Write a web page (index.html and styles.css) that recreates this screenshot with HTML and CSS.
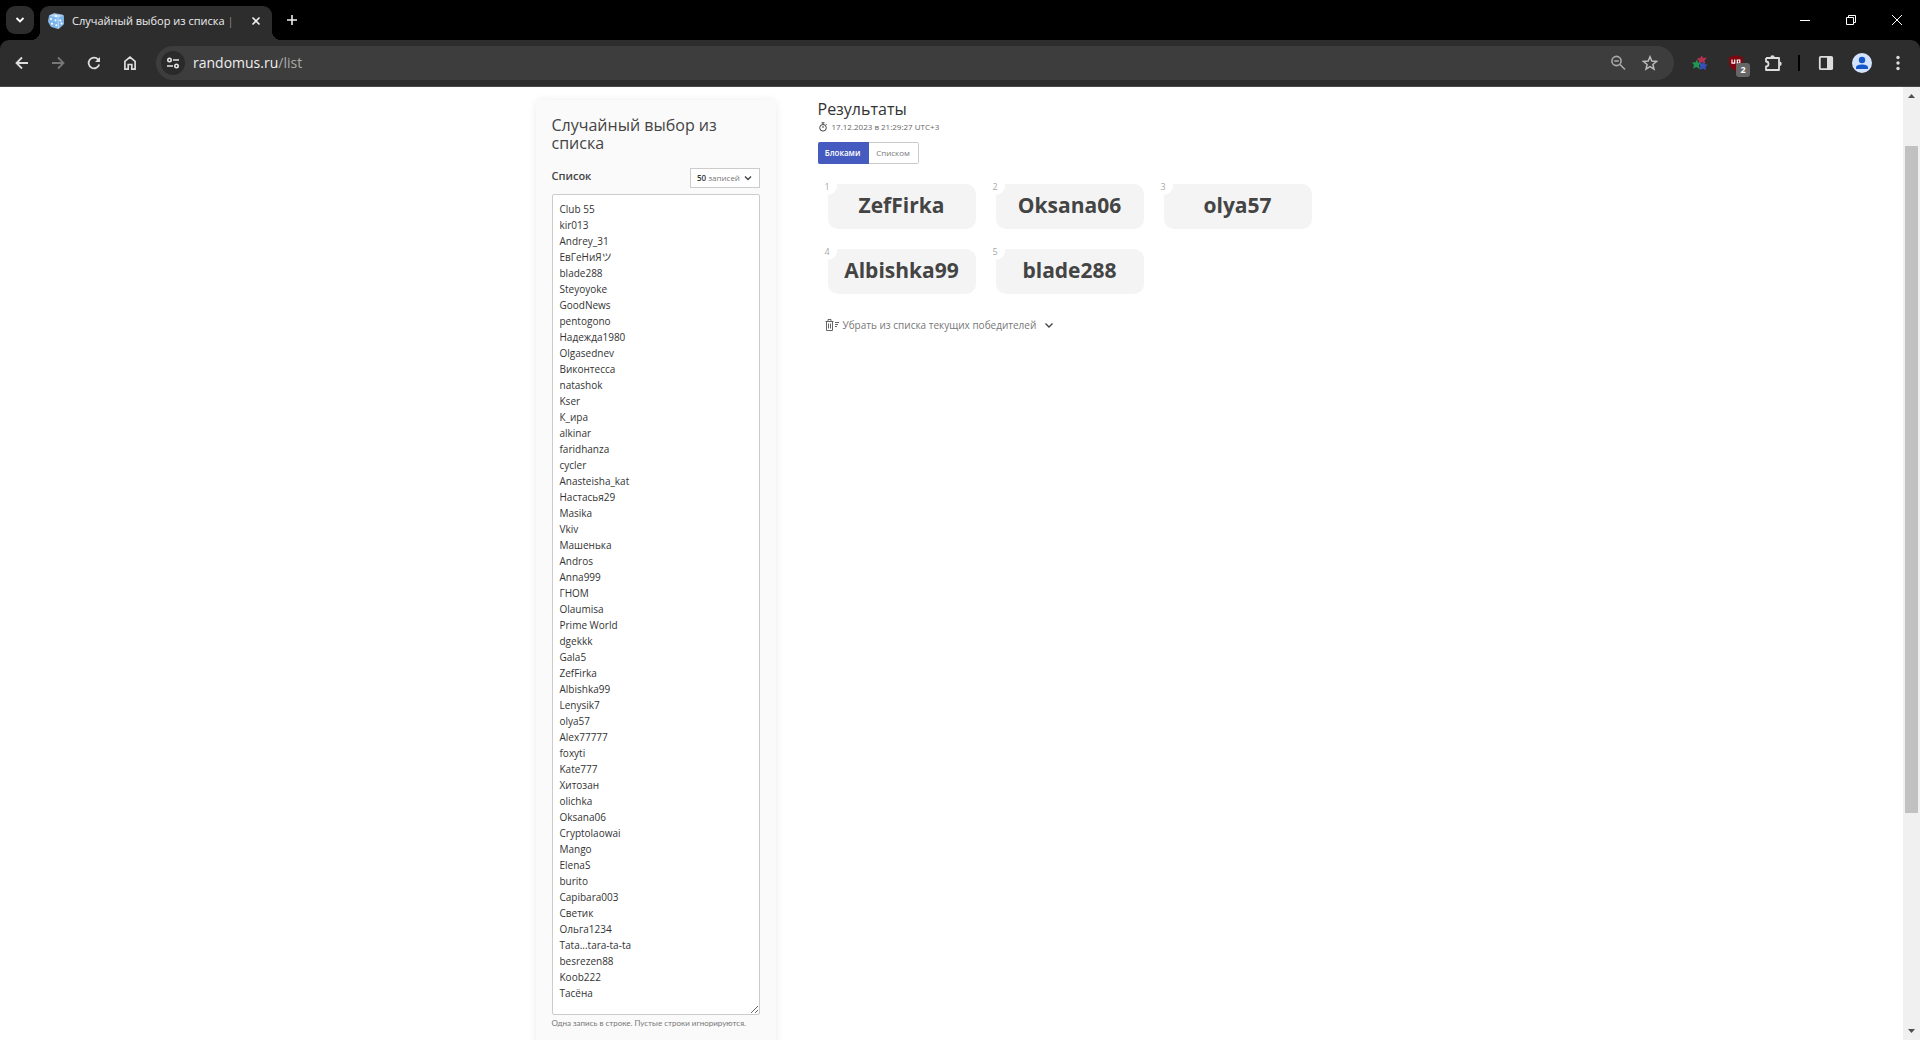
FILE: index.html
```html
<!DOCTYPE html>
<html lang="ru">
<head>
<meta charset="utf-8">
<title>Случайный выбор из списка</title>
<link rel="stylesheet" href="styles.css">
</head>
<body>
<div class="window">
  <header class="tabstrip">
    <button class="tab-search" aria-label="Поиск вкладок"><svg width="10" height="10" viewBox="0 0 10 10"><path d="M1.500 3l3.500 3.500L8.500 3" fill="none" stroke="#fff" stroke-width="1.800"/></svg></button>
    <div class="tab">
      <svg class="favicon" width="16" height="16" viewBox="0 0 16 16"><path d="M1.500 2.500L6 .5l8.500 1.500Q15.500 2.200 15.500 3l.3 8-5.300 4.800-7.500-2.300L.3 8.500z" fill="#7db6ec" stroke="#a9d0f5" stroke-width=".6" stroke-linejoin="round"/><path d="M1.500 2.800l8.500 2 5-2.300L6.500 1z" fill="#b5d8f8"/><path d="M10 5l.5 10.500" fill="none" stroke="#d4eafd" stroke-width=".8"/><g fill="#fff"><circle cx="8" cy="2.900" r="1"/><circle cx="3" cy="6" r="1"/><circle cx="7.500" cy="7.200" r="1"/><circle cx="4" cy="10.800" r="1"/><circle cx="8.300" cy="12.200" r="1"/><circle cx="12.300" cy="7.500" r="1"/><circle cx="13.500" cy="10.500" r="1"/></g></svg>
      <span class="tab-title">Случайный выбор из списка <span class="fade">|</span></span>
      <button class="icon-button tab-close" aria-label="Закрыть вкладку"><svg width="10" height="10" viewBox="0 0 10 10"><path d="M1.500 1.500l7 7M8.500 1.500l-7 7" stroke="#eee" stroke-width="1.600"/></svg></button>
    </div>
    <button class="icon-button new-tab" aria-label="Новая вкладка"><svg width="12" height="12" viewBox="0 0 12 12"><path d="M6 1v10M1 6h10" stroke="#eee" stroke-width="1.600"/></svg></button>
    <div class="window-controls">
      <button class="icon-button" aria-label="Свернуть"><svg width="10" height="10" viewBox="0 0 10 10"><path d="M0 5.500h10" stroke="#fff"/></svg></button>
      <button class="icon-button" aria-label="Восстановить"><svg width="10" height="10" viewBox="0 0 10 10"><path d="M.5 2.500h7v7h-7zM2.500 2V.5h7v7H8" fill="none" stroke="#fff"/></svg></button>
      <button class="icon-button" aria-label="Закрыть"><svg width="10" height="10" viewBox="0 0 10 10"><path d="M0 0l10 10M10 0L0 10" stroke="#fff"/></svg></button>
    </div>
  </header>
  <nav class="toolbar">
    <div class="nav-buttons">
      <button class="icon-button" aria-label="Назад"><svg width="16" height="16" viewBox="0 0 16 16"><path d="M14 8H3M8 2.500L2.500 8 8 13.500" fill="none" stroke="#ddd" stroke-width="1.800"/></svg></button>
      <button class="icon-button" aria-label="Вперёд"><svg width="16" height="16" viewBox="0 0 16 16"><path d="M2 8h11M8 2.500L13.500 8 8 13.500" fill="none" stroke="#777" stroke-width="1.800"/></svg></button>
      <button class="icon-button" aria-label="Обновить"><svg width="16" height="16" viewBox="0 0 16 16"><path d="M13.200 9.500A5.400 5.400 0 1 1 12 4.300L13 5.500" fill="none" stroke="#ddd" stroke-width="1.800"/><path d="M14 2v5H9z" fill="#ddd"/></svg></button>
      <button class="icon-button" aria-label="Домой"><svg width="16" height="16" viewBox="0 0 16 16"><path d="M2.900 6.300L8 2.200l5.100 4.100v7.800H9.800V9.500H6.200v4.600H2.900z" fill="none" stroke="#ddd" stroke-width="1.700"/></svg></button>
    </div>
    <div class="omnibox">
      <button class="site-info" aria-label="Сведения о сайте"><svg width="14" height="14" viewBox="0 0 14 14"><g fill="none" stroke="#e5e5e5" stroke-width="1.600"><circle cx="3.500" cy="4" r="1.700"/><path d="M7 4h6M1 10h6"/><circle cx="10.500" cy="10" r="1.700"/></g></svg></button>
      <span class="url">randomus.ru<span class="path">/list</span></span>
      <button class="icon-button" aria-label="Масштаб"><svg width="16" height="16" viewBox="0 0 16 16"><g fill="none" stroke="#aaa" stroke-width="1.600"><circle cx="6.500" cy="6" r="4.600"/><path d="M10 9.500l5 5M4.200 6h4.600"/></g></svg></button>
      <button class="icon-button" aria-label="Добавить в закладки"><svg width="16" height="16" viewBox="0 0 16 16"><path d="M8 1.800l1.800 4.300 4.700.4-3.600 3 1.100 4.600L8 11.700l-4 2.400 1.100-4.600-3.600-3 4.700-.4z" fill="none" stroke="#bbb" stroke-width="1.500"/></svg></button>
    </div>
    <div class="extensions">
      <button class="icon-button" aria-label="Расширение"><svg width="16" height="16" viewBox="0 0 16 16"><path d="M10 .5l1 2.500 4-.5-2.500 3 1 3-3.500-1.500-3 2V6L5 3.500l3-.5z" fill="#b5314f"/><path d="M5 4.500l1 3 4 .5-3 2 .5 4-3-2-3.500 1.500 1-3.500L0 7.500l3.500-.3z" fill="#219653"/><path d="M12 6.500l.8 2.500 3 1-2.300 1.500.5 3.500-3-1.500-3.500 1.500.8-3.500L7.500 8l3 .5z" fill="#3550b8"/></svg></button>
      <button class="icon-button blocker" aria-label="uBlock"><svg width="16" height="16" viewBox="0 0 16 16"><path d="M8 0q3 2 7 2v5c0 5-3 7-7 9-4-2-7-4-7-9V2q4 0 7-2z" fill="#800610"/><path d="M4 4.500v3.700h2.700V4.500M9.300 9.500V5h2.500v3H9.500" fill="none" stroke="#fff" stroke-width="1.200"/></svg><span class="badge">2</span></button>
      <button class="icon-button" aria-label="Расширения"><svg width="18" height="18" viewBox="0 0 18 18"><path d="M2 4h13v3.500M15 11v5H2v-3.500a2.400 2.400 0 0 0 0-5V4M15 7v5" fill="none" stroke="#ddd" stroke-width="1.800" stroke-linejoin="round"/><path d="M6.300 3.500a2.200 2.200 0 0 1 4.400 0zM15.500 7.500a2.200 2.200 0 0 1 0 4.400z" fill="#ddd"/></svg></button>
    </div>
    <div class="divider"></div>
    <div class="profile">
      <button class="icon-button" aria-label="Боковая панель"><svg width="16" height="16" viewBox="0 0 16 16"><rect x="1.800" y="1.800" width="12.400" height="12.400" rx="1" fill="none" stroke="#ddd" stroke-width="1.800"/><path d="M9 2h5v12H9z" fill="#ddd"/></svg></button>
      <button class="icon-button" aria-label="Профиль"><svg width="20" height="20" viewBox="0 0 20 20"><circle cx="10" cy="10" r="10" fill="#d3e3fd"/><circle cx="10" cy="7" r="3.200" fill="#1557c9"/><path d="M4 16v-1.500C4 12.200 7.500 11.500 10 11.500s6 .7 6 3V16z" fill="#1557c9"/></svg></button>
      <button class="icon-button" aria-label="Меню"><svg width="16" height="16" viewBox="0 0 16 16"><g fill="#ddd"><circle cx="8" cy="2.500" r="1.700"/><circle cx="8" cy="8" r="1.700"/><circle cx="8" cy="13.500" r="1.700"/></g></svg></button>
    </div>
  </nav>
  <div class="viewport">
    <main class="page">
      <form class="card">
        <h1>Случайный выбор из списка</h1>
        <div class="field-head">
          <label for="items">Список</label>
          <button type="button" class="count" aria-haspopup="true"><b>50</b> записей <svg width="8" height="8" viewBox="0 0 8 8"><path d="M1 2.500l3 3 3-3" fill="none" stroke="#444" stroke-width="1.400"/></svg></button>
        </div>
        <textarea id="items" rows="50" spellcheck="false">Club 55
kir013
Andrey_31
ЕвГеНиЯツ
blade288
Steyoyoke
GoodNews
pentogono
Надежда1980
Olgasednev
Виконтесса
natashok
Kser
К_ира
alkinar
faridhanza
cycler
Anasteisha_kat
Настасья29
Masika
Vkiv
Машенька
Andros
Anna999
ГНОМ
Olaumisa
Prime World
dgekkk
Gala5
ZefFirka
Albishka99
Lenysik7
olya57
Alex77777
foxyti
Kate777
Хитозан
olichka
Oksana06
Cryptolaowai
Mango
ElenaS
burito
Capibara003
Светик
Ольга1234
Tata...tara-ta-ta
besrezen88
Koob222
Тасёна</textarea>
        <p class="hint">Одна запись в строке. Пустые строки игнорируются.</p>
      </form>
      <section class="results">
        <h2>Результаты</h2>
        <p class="stamp"><svg width="10" height="10" viewBox="0 0 10 10"><g fill="none" stroke="#444"><circle cx="5" cy="5.800" r="3.300"/><path d="M3.500.8h3M5 1v1.500M5 4v2M8 2.200l.8.800"/></g></svg>17.12.2023 в 21:29:27 UTC+3</p>
        <div class="switch">
          <button class="active">Блоками</button><button>Списком</button>
        </div>
        <ol class="blocks">
          <li><span class="num">1</span>ZefFirka</li>
          <li><span class="num">2</span>Oksana06</li>
          <li><span class="num">3</span>olya57</li>
          <li><span class="num">4</span>Albishka99</li>
          <li><span class="num">5</span>blade288</li>
        </ol>
        <button class="remove"><svg width="14" height="12" viewBox="0 0 14 12"><g fill="none" stroke="#666"><path d="M.5 2.500h8M3 2V.5h3V2M1.500 3v8.500h6V3M3.500 4.500v5M5.500 4.500v5M10 3.500h4M10 5.500h3M10 7.500h2"/></g></svg>Убрать из списка текущих победителей<svg class="caret" width="10" height="10" viewBox="0 0 10 10"><path d="M1.500 3.500L5 7l3.500-3.500" fill="none" stroke="#444" stroke-width="1.400"/></svg></button>
      </section>
    </main>
    <div class="scrollbar" aria-hidden="true">
      <svg width="17" height="17" viewBox="0 0 17 17"><path d="M5 11l3.500-4 3.500 4z" fill="#505050"/></svg>
      <div class="track"><div class="thumb"></div></div>
      <svg width="17" height="17" viewBox="0 0 17 17"><path d="M5 6l3.500 4L12 6z" fill="#505050"/></svg>
    </div>
  </div>
</div>
</body>
</html>
```
FILE: styles.css
```css
* { box-sizing: border-box; }
body { margin: 0; font-family: "Open Sans", "Noto Sans CJK JP", sans-serif; color: #444; background: #fff; }
h1, h2, p, ol { margin: 0; padding: 0; font-weight: 400; }
button { border: 0; padding: 0; background: none; font: inherit; color: inherit; }
svg { display: block; flex: none; }
.window { display: flex; flex-direction: column; height: 100vh; overflow: hidden; }

.tabstrip { display: flex; align-items: center; height: 40px; flex: none; padding-left: 6px; background: #000; }
.tab-search { display: grid; place-items: center; width: 28px; height: 28px; border-radius: 9px; background: #2d2d2d; }
.tab { display: flex; align-items: center; gap: 8px; width: 232px; height: 34px; margin: 6px 0 0 6px; padding: 0 8px 4px; border-radius: 9px 9px 0 0; background: #2d2d2d; color: #eee; position: relative; }
.tab::before, .tab::after { content: ""; position: absolute; bottom: 0; width: 9px; height: 9px; }
.tab::before { right: 100%; background: radial-gradient(circle at 0 0, #000 9px, #2d2d2d 9px); }
.tab::after { left: 100%; background: radial-gradient(circle at 100% 0, #000 9px, #2d2d2d 9px); }
.tab-title { flex: 1; font-size: 11px; line-height: 16px; white-space: nowrap; }
.fade { color: #888; }
.icon-button { display: grid; place-items: center; }
.tab-close { width: 16px; height: 16px; }
.new-tab { width: 28px; height: 28px; margin-left: 6px; }
.window-controls { display: flex; margin-left: auto; }
.window-controls .icon-button { width: 46px; height: 40px; }

.toolbar { display: flex; align-items: center; height: 47px; flex: none; padding-right: 8px; background: #2d2d2d; border-bottom: 1px solid #4a4a4a; border-radius: 9px 9px 0 0; box-shadow: 0 -9px 0 0 #000; clip-path: inset(0); }
.window { background: linear-gradient(#000 60px, #fff 60px); }
.nav-buttons { display: flex; gap: 20px; padding: 0 18px 0 14px; }
.omnibox { display: flex; align-items: center; flex: 1; height: 34px; padding: 0 16px 0 5px; gap: 16px; border-radius: 17px; background: #3d3d3d; }
.site-info { display: grid; place-items: center; width: 24px; height: 24px; border-radius: 12px; background: #2a2a2a; }
.url { flex: 1; margin-left: -8px; font-size: 14px; line-height: 20px; color: #eee; }
.path { color: #aaa; }
.extensions { display: flex; align-items: center; gap: 20px; padding: 0 16px 0 18px; }
.blocker { position: relative; }
.badge { position: absolute; left: 8px; top: 8px; width: 14px; height: 14px; border-radius: 3px; background: #666; color: #fff; font-size: 9px; font-weight: 700; line-height: 14px; }
.divider { width: 2px; height: 16px; background: #000; }
.profile { display: flex; align-items: center; gap: 18px; padding-left: 18px; padding-right: 6px; }

.viewport { display: flex; flex: 1; min-height: 0; background: #fff; }
.page { display: flex; gap: 42px; flex: 0 1 832px; min-width: 0; margin: 0 auto; overflow: hidden; padding: 13px 8px 0; box-sizing: content-box; }
.card { flex: 0 0 240px; padding: 16px 16px 60px; align-self: flex-start; border-radius: 4px; background: #fafafa; box-shadow: 0 0 8px rgba(0, 0, 0, .08); }
h1 { font-size: 16px; line-height: 18px; }
.field-head { display: flex; align-items: center; justify-content: space-between; margin: 16px 0 6px; }
.field-head label { font-size: 11px; line-height: 16px; font-weight: 600; padding-bottom: 4px; }
.count { display: flex; align-items: center; justify-content: center; gap: 2px; width: 70px; height: 20px; border: 1px solid #ccc; background: #fff; font-size: 8px; line-height: 12px; color: #777; }
.count b { color: #333; font-weight: 600; }
.count svg { margin-left: 2px; }
textarea { display: block; width: 100%; margin: 0; padding: 6px 7px 13px; border: 1px solid #ccc; border-radius: 2px; background: #fff; color: #333; font: 10px/16px "Open Sans", "Noto Sans CJK JP", sans-serif; resize: vertical; overflow: hidden; outline: 0; }
.hint { margin-top: 3px; font-family: Lato, "Open Sans", sans-serif; font-size: 8px; line-height: 10px; color: #777; white-space: nowrap; }

.results { flex: 1; min-width: 0; }
h2 { font-size: 16px; line-height: 18px; color: #333; }
.stamp { display: flex; align-items: center; gap: 4px; margin-top: 4px; font-size: 8px; line-height: 10px; color: #666; }
.switch { display: flex; margin-top: 10px; font-size: 8px; }
.switch button { width: 50px; height: 22px; padding-bottom: 2px; border: 1px solid #ccc; border-left: 0; border-radius: 0 2px 2px 0; color: #777; }
.switch .active { width: 51px; border-color: #465bc0; border-radius: 2px 0 0 2px; background: #465bc0; color: #fff; font-weight: 600; }
.blocks { display: grid; grid-template-columns: repeat(auto-fill, 148px); gap: 20px; margin: 20px 0 0 10px; list-style: none; }
.blocks li { position: relative; height: 45px; border-radius: 10px; background: #f4f4f4; font-size: 21px; line-height: 43px; font-weight: 700; text-align: center; }
.num { position: absolute; left: -10px; top: -8px; width: 19px; height: 19px; border-radius: 10px; background: #fff; color: #aaa; font-size: 9px; font-weight: 400; line-height: 22px; }
.remove { display: flex; align-items: center; gap: 4px; margin: 23px 0 0 7px; font-size: 10px; line-height: 16px; color: #777; }
.caret { margin-left: 4px; }

.scrollbar { display: flex; flex-direction: column; flex: 0 0 17px; background: #f0f0f0; }
.track { flex: 1; padding: 42px 2px 0; }
.thumb { height: 76%; background: #c1c1c1; }
```
